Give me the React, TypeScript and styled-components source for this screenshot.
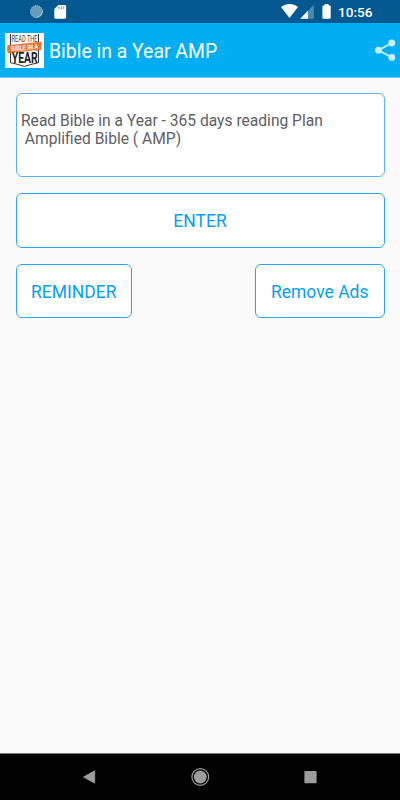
import React from "react";
import styled, { createGlobalStyle } from "styled-components";

const GlobalStyle = createGlobalStyle`
  * { box-sizing: border-box; }
  body { margin: 0; font-family: Roboto, "Liberation Sans", sans-serif; background: #fafafa; }
  svg { display: block; flex: none; overflow: visible; }
`;

const Screen = styled.div`
  width: 400px;
  height: 800px;
  display: flex;
  flex-direction: column;
  background: #fafafa;
  overflow: hidden;
`;

const StatusBar = styled.header`
  height: 23px;
  flex: none;
  display: flex;
  align-items: center;
  justify-content: space-between;
  background: #02588f;
  color: #fff;
`;

const StatusGroup = styled.div`
  display: flex;
  height: 23px;
`;

const Clock = styled.time`
  width: 62px;
  padding-top: 1px;
  font-size: 13.6px;
  line-height: 23px;
  font-weight: 500;
`;

const AppBar = styled.div`
  height: 55px;
  flex: none;
  display: flex;
  align-items: center;
  padding: 0 4px 0 5px;
  background: #02aef1;
  border-bottom: 1px solid #6dcdf5;
`;

const Title = styled.h1`
  flex: 1;
  margin: 3px 0 0 5px;
  color: #fff;
  font-size: 19.4px;
  line-height: 24px;
  font-weight: 400;
  white-space: nowrap;
`;

const Content = styled.main`
  flex: 1;
  display: flex;
  flex-direction: column;
  gap: 16px;
  padding: 15px 15.5px 0;
`;

const Card = styled.section`
  height: 84px;
  padding: 18px 4.5px;
  border: 1px solid #58b3ee;
  border-radius: 6px;
  background: #fff;
  color: #606060;
  font-size: 15.6px;
  line-height: 18px;
  white-space: pre;
`;

const ButtonRow = styled.div`
  display: flex;
  justify-content: space-between;
`;

const OutlineButton = styled.button<{ $width?: number }>`
  width: ${(p) => (p.$width ? `${p.$width}px` : "100%")};
  height: 54.5px;
  padding: 2px 0 0;
  border: 1px solid #2ba4eb;
  border-radius: 6px;
  background: #fff;
  color: #049fee;
  font-family: inherit;
  font-size: 17.5px;
  line-height: 24px;
  white-space: nowrap;
`;

const NavBar = styled.nav`
  height: 47px;
  flex: none;
  display: flex;
  align-items: center;
  justify-content: space-between;
  padding: 0 80px 1px 79px;
  background: #000;
  border-top: 1px solid #777;
`;

const NotificationIcons = () => (
  <svg width="80" height="23" viewBox="0 0 80 23">
    <circle cx="36.5" cy="11.6" r="6" fill="#659cb9" stroke="#a5c8d8" strokeDasharray="1.2 .8" />
    <path d="M42.4 8.5a7 7 0 0 1-9 8.6 7.5 7.5 0 0 0 9-8.6Z" fill="#dcebf2" />
    <path d="M58.4 5h6.3q1.4 0 1.4 1.4v10.9q0 1.4-1.4 1.4h-9q-1.4 0-1.4-1.4V9Z" fill="#fff" />
    <path d="M59 6.5v2.6M61.4 6.5v2.6M63.8 6.5v2.6" stroke="#5c8db2" strokeWidth="1" />
  </svg>
);

const SystemIcons = () => (
  <svg width="57" height="23" viewBox="281 0 57 23">
    <path d="M281 7.1C286 3 293 3 298 7.1L289.5 18Z" fill="#fff" />
    <path d="M313.8 4.8V18.8H300.2Z" fill="#4c89af" />
    <path d="M308 10.8v8h-7.8Z" fill="#fff" />
    <path d="M324.6 4h4v1.6h1.1q1 0 1 1v11.2q0 1-1 1h-6.3q-1 0-1-1V6.6q0-1 1-1h1.2Z" fill="#fff" />
  </svg>
);

const Logo = () => (
  <svg width="39" height="35" viewBox="0 0 39 35" role="img" aria-label="Read the Bible in a Year">
    <rect width="39" height="35" fill="#fff" />
    <path d="M5.5 1v28.7L12 31.2l7.5 2.2 7.5-2.2 6.5-1.5V1" fill="#fff" stroke="#343636" strokeWidth="1" />
    <text x="19.5" y="8.8" textAnchor="middle" textLength="26" lengthAdjust="spacingAndGlyphs" fontFamily="Roboto" fontSize="9" fontWeight="400" fill="#373737">READ THE</text>
    <path d="M33 9l3.5.5-1 7L31 18ZM5 20l-2.5-1 .2-6L6 12Z" fill="#a65a34" />
    <path d="M2.4 12.2L35.8 8.8l.6 8-33.6 3.4Z" fill="#eb7134" />
    <text x="19.8" y="17" textAnchor="middle" textLength="27" lengthAdjust="spacingAndGlyphs" fontFamily="Roboto" fontSize="7.2" fontWeight="700" fill="#fff" transform="rotate(-5 20 17)">BIBLE IN A</text>
    <text x="19.7" y="30" textAnchor="middle" textLength="26" lengthAdjust="spacingAndGlyphs" fontFamily="Roboto" fontSize="14" fontWeight="700" fill="#222">YEAR</text>
  </svg>
);

const ShareIcon = () => (
  <svg width="22" height="22" viewBox="0 0 22 22" fill="#caeefb">
    <path d="M17.8 4L4.4 11.2l13.4 7.2" fill="none" stroke="#caeefb" strokeWidth="1.8" />
    <circle cx="17.8" cy="4" r="3.4" />
    <circle cx="4.4" cy="11.2" r="3.4" />
    <circle cx="17.8" cy="18.4" r="3.4" />
  </svg>
);

const BackIcon = () => (
  <svg width="20" height="20" viewBox="0 0 20 20">
    <path d="M15.7 3.8v12.4L4.5 10Z" fill="#9c9c9c" stroke="#9c9c9c" strokeWidth=".8" strokeLinejoin="round" />
  </svg>
);

const HomeIcon = () => (
  <svg width="20" height="20" viewBox="0 0 20 20">
    <circle cx="10.3" cy="10" r="8.4" fill="none" stroke="#9c9c9c" strokeWidth="1.2" />
    <circle cx="10.3" cy="10" r="6.4" fill="#9c9c9c" />
  </svg>
);

const RecentsIcon = () => (
  <svg width="20" height="20" viewBox="0 0 20 20">
    <rect x="4.4" y="4" width="12.2" height="12.2" rx="1" fill="#9c9c9c" />
  </svg>
);

export default function App() {
  return (
    <Screen>
      <GlobalStyle />
      <StatusBar>
        <NotificationIcons />
        <StatusGroup>
          <SystemIcons />
          <Clock>10:56</Clock>
        </StatusGroup>
      </StatusBar>
      <AppBar>
        <Logo />
        <Title>Bible in a Year AMP</Title>
        <ShareIcon />
      </AppBar>
      <Content>
        <Card>{"Read Bible in a Year - 365 days reading Plan\n Amplified Bible ( AMP)"}</Card>
        <OutlineButton>ENTER</OutlineButton>
        <ButtonRow>
          <OutlineButton $width={116.5}>REMINDER</OutlineButton>
          <OutlineButton $width={129.5}>Remove Ads</OutlineButton>
        </ButtonRow>
      </Content>
      <NavBar>
        <BackIcon />
        <HomeIcon />
        <RecentsIcon />
      </NavBar>
    </Screen>
  );
}
